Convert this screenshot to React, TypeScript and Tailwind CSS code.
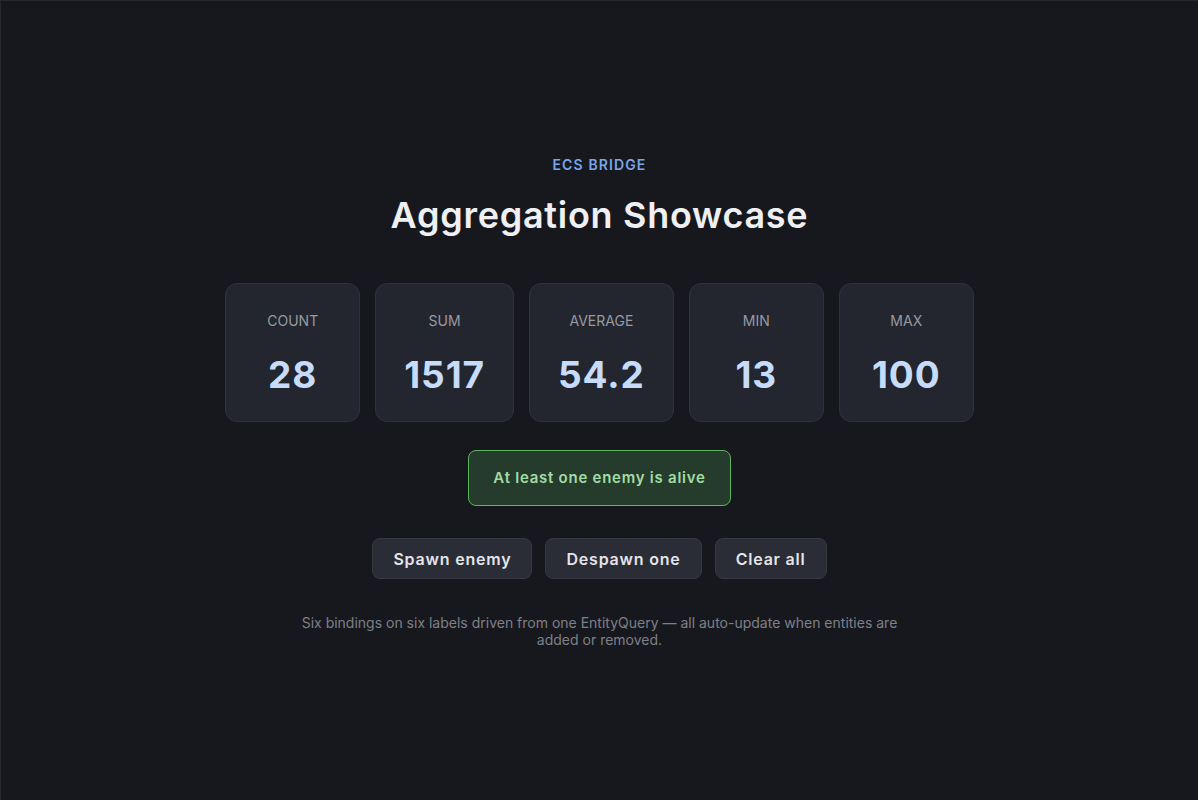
import { useState } from 'react';

const stats = [
  { label: 'Count', value: '28' },
  { label: 'Sum', value: '1517' },
  { label: 'Average', value: '54.2' },
  { label: 'Min', value: '13' },
  { label: 'Max', value: '100' },
];

function StatCard({ label, value }: { label: string; value: string }) {
  return (
    <div className="min-w-[135px] rounded-xl border border-[#2f323a] bg-[#23262e] px-7 pt-[27px] pb-[24px] flex flex-col items-center">
      <span className="text-[14px] uppercase text-[#979aa3] leading-5">{label}</span>
      <span className="mt-[22px] text-[37px] font-bold leading-[44px] tracking-[0.025em] text-[#c6dcfa]">
        {value}
      </span>
    </div>
  );
}

export default function App() {
  const [alive] = useState(true);

  return (
    <div
      className="min-h-screen bg-[#17181d] border-t border-l border-[#26282d] flex flex-col items-center justify-center text-white"
      style={{ fontFamily: 'Inter, "Noto Sans", sans-serif' }}
    >
      <div className="flex flex-col items-center mt-[1px]">
        <p className="text-[14px] font-semibold tracking-[0.08em] text-[#79a6ea]">ECS BRIDGE</p>
        <h1 className="mt-[18px] text-[36px] font-semibold tracking-[0.02em] text-[#eef0f4] leading-[44px]">
          Aggregation Showcase
        </h1>

        <div className="mt-[46px] flex gap-[15px]">
          {stats.map((s) => (
            <StatCard key={s.label} label={s.label} value={s.value} />
          ))}
        </div>

        {alive && (
          <div className="mt-[28px] rounded-lg border border-[#5cb45e] bg-[#253b2b] px-[24px] py-[16px] text-[15px] font-semibold tracking-[0.05em] text-[#a3dba5] leading-[22px]">
            At least one enemy is alive
          </div>
        )}

        <div className="mt-[32px] flex gap-[13px]">
          {['Spawn enemy', 'Despawn one', 'Clear all'].map((b) => (
            <button
              key={b}
              className="h-[41px] rounded-lg border border-[#363944] bg-[#2a2c36] px-[20px] text-[16px] font-semibold tracking-[0.05em] text-[#e3e5ea]"
            >
              {b}
            </button>
          ))}
        </div>

        <p className="mt-[35px] max-w-[600px] text-center text-[14px] leading-[17px] text-[#7d8089]">
          Six bindings on six labels driven from one EntityQuery — all auto-update when entities are added or removed.
        </p>
      </div>
    </div>
  );
}
